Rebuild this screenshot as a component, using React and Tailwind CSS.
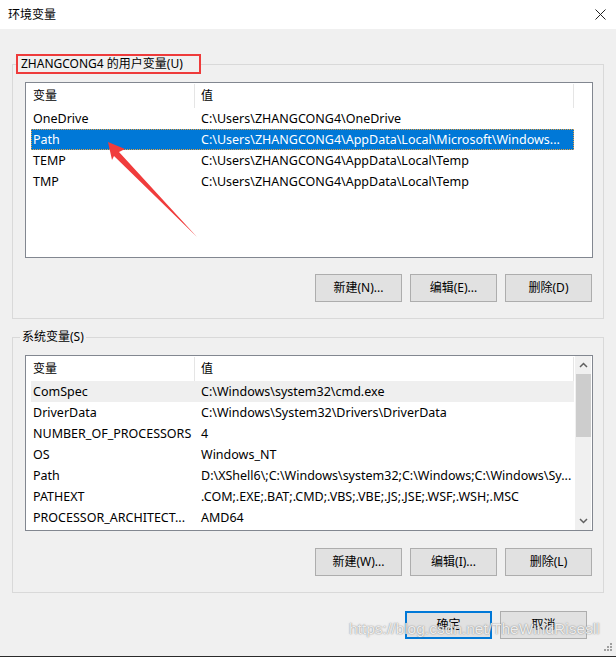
import React from 'react'

const userVars = [
  { name: "OneDrive", value: "C:\\Users\\ZHANGCONG4\\OneDrive" },
  { name: "Path", value: "C:\\Users\\ZHANGCONG4\\AppData\\Local\\Microsoft\\Windows..." },
  { name: "TEMP", value: "C:\\Users\\ZHANGCONG4\\AppData\\Local\\Temp" },
  { name: "TMP", value: "C:\\Users\\ZHANGCONG4\\AppData\\Local\\Temp" },
];

const sysVars = [
  { name: "ComSpec", value: "C:\\Windows\\system32\\cmd.exe" },
  { name: "DriverData", value: "C:\\Windows\\System32\\Drivers\\DriverData" },
  { name: "NUMBER_OF_PROCESSORS", value: "4" },
  { name: "OS", value: "Windows_NT" },
  { name: "Path", value: "D:\\XShell6\\;C:\\Windows\\system32;C:\\Windows;C:\\Windows\\Sy..." },
  { name: "PATHEXT", value: ".COM;.EXE;.BAT;.CMD;.VBS;.VBE;.JS;.JSE;.WSF;.WSH;.MSC" },
  { name: "PROCESSOR_ARCHITECT...", value: "AMD64" },
];

const WinButton = ({ children, primary }) => (
  <button
    className={`w-[87px] h-[28px] bg-[#e1e1e1] text-black text-[12px] ${primary ? "border-2 border-[#0078d7]" : "border border-[#adadad]"}`}
  >
    {children}
  </button>
)

const VarList = ({ rows, selected, hovered, scroll }) => {
  return (
    <div className="h-[176px] border border-[#828790] bg-white pl-[5px] flex overflow-hidden">
      <div className="w-[543px] flex flex-col">
        <div className="h-[25px] flex items-stretch pt-[1px]">
          <div className="w-[164px] border-r border-[#e5e5e5] pl-[2px] flex items-center">变量</div>
          <div className="flex-1 border-r border-[#e5e5e5] pl-[6px] flex items-center">值</div>
        </div>
        {rows.map((row, index) => (
          <div
            key={index}
            className={`h-[21px] flex items-center whitespace-nowrap text-[12.5px] ${index === selected ? "bg-[#0078d7] text-white outline outline-1 outline-dotted outline-offset-[-1px] outline-[#e8a040]" : index === hovered ? "bg-[#efefef]" : ""}`}
          >
            <div className="w-[165px] pl-[2px] overflow-hidden">{row.name}</div>
            <div className="flex-1 pl-[5px] overflow-hidden">{row.value}</div>
          </div>
        ))}
      </div>
      {
        scroll &&
        <div className="ml-[1px] w-[16px] bg-[#f0f0f0] flex flex-col items-center">
          <div className="h-[18px] flex items-center justify-center">
            <svg width="9" height="6" viewBox="0 0 9 6"><path d="M1 5 L4.5 1.5 L8 5" fill="none" stroke="#606060" strokeWidth="1.5" /></svg>
          </div>
          <div className="w-[15px] h-[63px] bg-[#cdcdcd]" />
          <div className="flex-1" />
          <div className="h-[18px] flex items-center justify-center">
            <svg width="9" height="6" viewBox="0 0 9 6"><path d="M1 1 L4.5 4.5 L8 1" fill="none" stroke="#606060" strokeWidth="1.5" /></svg>
          </div>
        </div>
      }
    </div>
  )
}

const App = () => {
  return (
    <div
      className="relative w-[616px] h-[657px] bg-[#f0f0f0] text-black text-[12px] leading-[16px] overflow-hidden border-b border-[#2a2a2a]"
      style={{ fontFamily: '"Noto Sans", "Noto Sans CJK SC", sans-serif' }}
    >
      <header className="h-[29px] bg-white flex items-center justify-between pl-2 pr-[10px]">
        <span className="text-[12px]">环境变量</span>
        <svg width="11" height="11" viewBox="0 0 11 11">
          <path d="M0.5 0.5 L10.5 10.5 M10.5 0.5 L0.5 10.5" stroke="#222" strokeWidth="1" />
        </svg>
      </header>

      <div className="px-3">
        <fieldset className="mt-[25px] border border-[#d9d9d9] pl-3 pr-[10px] pb-4">
          <legend className="ml-[-9px] w-[185px] pl-[3px] h-[20px] border-2 border-[#ee3b3b] leading-[16px]">ZHANGCONG4 的用户变量(U)</legend>
          <div className="mt-2">
            <VarList rows={userVars} selected={1} />
          </div>
          <div className="mt-4 flex justify-end gap-2 pr-[1px]">
            <WinButton>新建(N)...</WinButton>
            <WinButton>编辑(E)...</WinButton>
            <WinButton>删除(D)</WinButton>
          </div>
        </fieldset>

        <fieldset className="mt-[10px] border border-[#d9d9d9] pl-3 pr-[10px] pb-4">
          <legend className="ml-[-5px] px-[2px] leading-[16px]">系统变量(S)</legend>
          <div className="mt-[10px]">
            <VarList rows={sysVars} hovered={0} scroll />
          </div>
          <div className="mt-[17px] flex justify-end gap-2 pr-[1px]">
            <WinButton>新建(W)...</WinButton>
            <WinButton>编辑(I)...</WinButton>
            <WinButton>删除(L)</WinButton>
          </div>
        </fieldset>

        <div className="mt-[18px] flex justify-end gap-2 pr-[17px]">
          <WinButton primary>确定</WinButton>
          <WinButton>取消</WinButton>
        </div>
      </div>

      {/* red arrow annotation */}
      <svg className="absolute left-0 top-0 pointer-events-none" width="616" height="657">
        <polygon points="108,142 125,149 119,152 197,237 114,156 112,160" fill="#f03c3c" />
      </svg>

      {/* watermark */}
      <div
        className="absolute left-[349px] top-[621px] text-[15.5px] text-white/85 pointer-events-none whitespace-nowrap"
        style={{ fontFamily: '"Liberation Sans", Arial, sans-serif', textShadow: '0 0 1px rgba(100,100,100,0.8), 0 0 2px rgba(150,150,150,0.6)' }}
      >
        https://blog.csdn.net/TheWindRisesll
      </div>

      {/* resize grip */}
      <svg className="absolute right-[3px] bottom-[4px]" width="10" height="10" viewBox="0 0 10 10">
        <rect x="7" y="1" width="2" height="2" fill="#a0a0a0" />
        <rect x="4" y="4" width="2" height="2" fill="#a0a0a0" />
        <rect x="7" y="4" width="2" height="2" fill="#a0a0a0" />
        <rect x="1" y="7" width="2" height="2" fill="#a0a0a0" />
        <rect x="4" y="7" width="2" height="2" fill="#a0a0a0" />
        <rect x="7" y="7" width="2" height="2" fill="#a0a0a0" />
      </svg>
    </div>
  )
}

export default App
